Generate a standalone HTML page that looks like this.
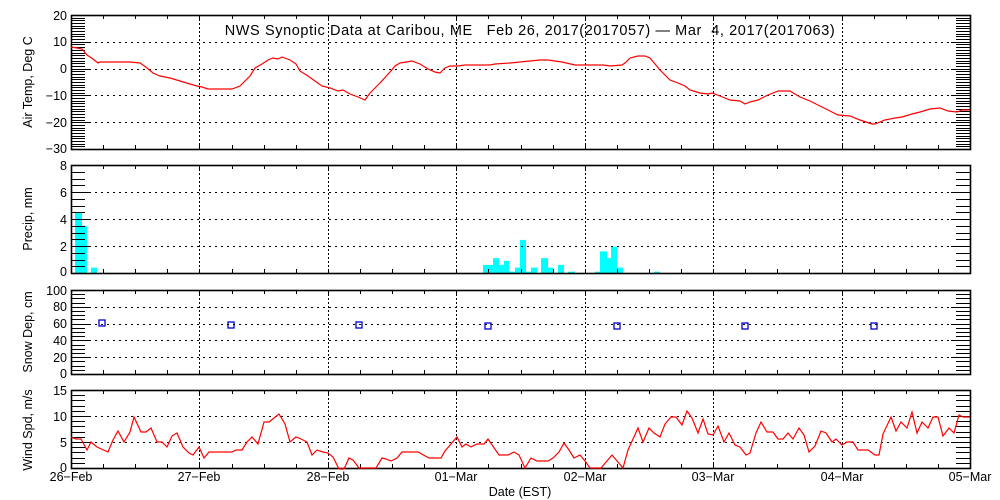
<!DOCTYPE html>
<html><head><meta charset="utf-8"><style>
html,body{margin:0;padding:0;background:#fff;}
svg{display:block;}
text{font-family:"Liberation Sans",sans-serif;font-size:12.5px;fill:#000;white-space:pre;}
</style></head><body>
<svg id="s" width="1000" height="500" xmlns="http://www.w3.org/2000/svg">
<text x="530" y="35" text-anchor="middle" xml:space="preserve" style="font-size:14.5px;letter-spacing:0.6px">NWS Synoptic Data at Caribou, ME   Feb 26, 2017(2017057) — Mar  4, 2017(2017063)</text>
<g text-anchor="end">
<text x="67" y="20">20</text><text x="67" y="46">10</text><text x="67" y="73">0</text><text x="67" y="100">−10</text><text x="67" y="127">−20</text><text x="67" y="153">−30</text>
<text x="67" y="170">8</text><text x="67" y="197">6</text><text x="67" y="224">4</text><text x="67" y="251">2</text><text x="67" y="276">0</text>
<text x="67" y="295">100</text><text x="67" y="311">80</text><text x="67" y="328">60</text><text x="67" y="345">40</text><text x="67" y="362">20</text><text x="67" y="378">0</text>
<text x="67" y="395">15</text><text x="67" y="421">10</text><text x="67" y="447">5</text><text x="67" y="472">0</text>
</g>
<g text-anchor="middle" style="font-size:13px">
<text transform="translate(32,82) rotate(-90)">Air Temp, Deg C</text>
<text transform="translate(32,219) rotate(-90)">Precip, mm</text>
<text transform="translate(32,332) rotate(-90)">Snow Dep, cm</text>
<text transform="translate(32,430) rotate(-90)">Wind Spd, m/s</text>
</g>
<g text-anchor="middle">
<text x="71" y="481">26−Feb</text><text x="199" y="481">27−Feb</text><text x="328" y="481">28−Feb</text><text x="456" y="481">01−Mar</text><text x="585" y="481">02−Mar</text><text x="713" y="481">03−Mar</text><text x="842" y="481">04−Mar</text><text x="970" y="481">05−Mar</text>
<text x="520" y="496">Date (EST)</text>
</g>
<g id="g"></g>
</svg>
<script>
var g=document.getElementById('g'),h='';
var X0=71,X1=970,D=(X1-X0)/7;
function L(a,b,c,d,e){h+='<line x1="'+a+'" y1="'+b+'" x2="'+c+'" y2="'+d+'" stroke="#000" stroke-width="1"'+(e?' stroke-dasharray="'+e+'"':'')+'/>';}
var P=[[15,149,20,-30,1,10,[10,0,-10,-20]],[165,273,8,0,0.5,2,[6,4,2]],[290,374,100,0,5,20,[80,60,40,20]],[390,468,15,0,1,5,[10,5]]];
P.forEach(function(p){var t=p[0],b=p[1],top=p[2],bot=p[3];
 function Y(v){return t+(top-v)*(b-t)/(top-bot);}
 p[6].forEach(function(v){var y=Math.round(Y(v))+.5;L(X0,y,X1,y,'2,4');});
 for(var d=1;d<7;d++){var x=Math.round(X0+d*D)+.5;L(x,t,x,b,'2,2');}
 for(var i=1;i<28;i++){var x=Math.round(X0+i*D/4)+.5;L(x,t,x,t+4);L(x,b,x,b-4);}
 var n=Math.round((top-bot)/p[4]);
 for(var i=0;i<=n;i++){var v=bot+i*p[4],y=Math.round(Y(v))+.5,maj=Math.abs(v/p[5]-Math.round(v/p[5]))<1e-6;
  var l=maj?19:14;L(X0,y,X0+l,y);L(X1-l,y,X1,y);}
 h+='<rect x="'+(X0+.5)+'" y="'+(t+.5)+'" width="'+(X1-X0)+'" height="'+(b-t)+'" fill="none" stroke="#000" stroke-width="1.6"/>';
});
var bars=[[75,82,4.5],[82,87,3.5],[91,97,0.4],[483,493,0.6],[493,499,1.1],[499,504,0.6],[504,509,0.9],[509,515,0.1],[515,520,0.4],[520,526,2.45],[526,531,0.1],[531,537,0.4],[541,548,1.1],[548,553,0.4],[558,564,0.6],[568,575,0.1],[595,600,0.1],[600,607,1.6],[607,611,1.1],[611,617,1.95],[617,623,0.4],[654,660,0.1]];
var bb='';bars.forEach(function(r){var hh=r[2]*13.5;bb+='<rect x="'+r[0]+'" y="'+(273-hh)+'" width="'+(r[1]-r[0])+'" height="'+hh+'" fill="#00ffff"/>';});
[[102,323],[231,325],[359,325],[488,326],[617,326],[745,326],[874,326]].forEach(function(q){bb+='<rect x="'+(q[0]-3)+'" y="'+(q[1]-3)+'" width="6" height="6" fill="none" stroke="#0000cc" stroke-width="1.3"/>';});
var T=[[71,47],[77,48],[82,49],[87,55],[93,59],[98,63],[100,62],[130,62],[140,63],[143,65],[147,68],[153,73],[160,76],[170,78],[180,81],[190,84],[197,86],[202,87],[208,89],[232,89],[240,86],[250,76],[255,68],[262,64],[268,60],[273,58],[278,59],[282,57],[290,60],[296,64],[300,71],[308,76],[315,81],[322,86],[330,88],[338,91],[343,90],[350,94],[358,97],[365,100],[370,93],[380,83],[390,72],[395,66],[400,63],[412,61],[420,64],[428,69],[435,72],[440,73],[445,68],[450,66],[458,66],[465,65],[490,65],[495,64],[510,63],[520,62],[530,61],[540,60],[548,60],[555,61],[562,62],[575,65],[603,65],[610,66],[622,65],[625,63],[630,58],[638,56],[645,56],[650,58],[660,70],[670,80],[678,83],[685,86],[690,90],[700,93],[708,94],[712,93],[720,96],[730,100],[740,101],[745,104],[750,102],[758,100],[768,95],[778,91],[790,91],[800,97],[810,101],[822,107],[830,111],[838,115],[850,116],[860,120],[872,124],[875,124],[885,120],[895,118],[902,117],[912,114],[920,112],[930,109],[940,108],[948,111],[957,112],[962,110],[970,110]];
var W=[[71,437],[73,438],[76,439],[81,439],[87,450],[91,442],[97,447],[108,452],[113,440],[118,431],[124,442],[130,432],[134,417],[141,432],[146,432],[151,428],[157,442],[162,442],[167,447],[172,436],[177,433],[183,447],[189,453],[193,455],[199,447],[204,458],[209,452],[232,452],[236,450],[242,450],[247,442],[252,437],[258,444],[264,422],[269,422],[274,418],[279,414],[285,424],[290,442],[296,437],[301,439],[307,442],[312,455],[317,450],[323,452],[328,453],[333,457],[339,469],[344,469],[349,458],[353,460],[359,468],[376,468],[382,458],[386,459],[391,461],[397,458],[402,452],[418,452],[429,458],[441,458],[445,451],[457,437],[462,447],[466,444],[471,447],[477,444],[484,444],[488,439],[499,455],[508,455],[514,452],[519,455],[525,468],[531,458],[537,461],[548,461],[553,458],[559,452],[564,443],[569,450],[574,458],[580,455],[585,461],[590,468],[601,468],[612,455],[623,468],[628,450],[638,428],[643,442],[649,428],[654,433],[660,437],[665,424],[671,417],[676,417],[682,425],[687,411],[692,418],[698,433],[703,419],[708,434],[713,435],[718,426],[724,442],[729,433],[735,445],[740,447],[746,455],[750,453],[756,433],[761,422],[767,432],[773,432],[778,439],[783,439],[788,433],[793,439],[799,428],[804,435],[809,452],[815,446],[821,431],[826,433],[832,442],[836,439],[842,445],[847,442],[853,442],[858,450],[868,450],[875,455],[879,455],[883,434],[891,417],[896,431],[901,422],[907,428],[912,412],[917,433],[922,422],[928,428],[933,417],[938,417],[943,436],[949,428],[954,433],[959,415],[963,417],[970,417]];
function pl(a){return '<polyline fill="none" stroke="#ff0000" stroke-width="1.2" points="'+a.map(function(q){return q.join(',')}).join(' ')+'"/>';}
g.innerHTML=bb+h+pl(T)+pl(W);
</script>
</body></html>
